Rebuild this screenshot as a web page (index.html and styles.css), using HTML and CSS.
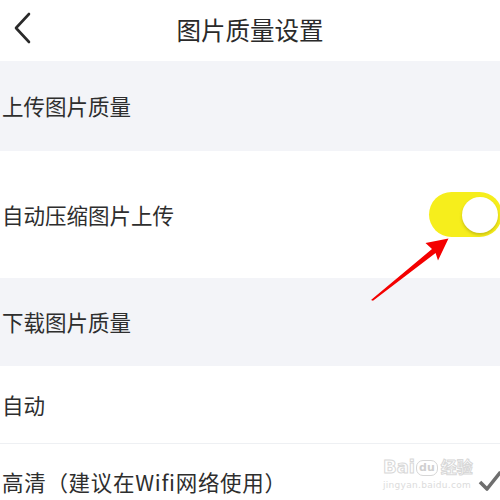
FILE: index.html
```html
<!DOCTYPE html>
<html lang="zh-CN">

<head>
	<meta charset="UTF-8">
	<meta name="viewport" content="width=device-width, initial-scale=1.0">
	<title>图片质量设置</title>
	<link rel="stylesheet" href="styles.css">
</head>

<body>
	<div class="page">
		<header class="top">
			<svg class="back" width="20" height="32" viewBox="0 0 20 32">
				<path d="M16 2 L3 16 L16 30" fill="none" stroke="#2a2a2a" stroke-width="2.6" stroke-linecap="round" stroke-linejoin="round" />
			</svg>
			<h1>图片质量设置</h1>
		</header>

		<div class="group group-upload">上传图片质量</div>

		<div class="row row-auto-zip">
			<span>自动压缩图片上传</span>
			<span class="switch"><i></i></span>
		</div>

		<div class="group group-download">下载图片质量</div>

		<div class="row row-auto">自动</div>

		<div class="row row-hd">
			<span class="hd-text">高清（建议在Wifi网络使用）</span>
			<svg class="check" width="24" height="22" viewBox="0 0 24 22">
				<path d="M2 12 L9 19 L22.5 2" fill="none" stroke="#6e6e6e" stroke-width="3.6" stroke-linejoin="round" />
			</svg>
		</div>

		<!-- watermark -->
		<div class="mark">
			<div class="mark-top">Bai<span class="paw">du</span><span class="cn">经验</span></div>
			<div class="mark-url">jingyan.baidu.com</div>
		</div>

		<!-- red pointer -->
		<svg class="arrow" width="500" height="500" viewBox="0 0 500 500">
			<polygon points="371,300 373,300.8 435.6,253 438,260.5 448.5,238.5 425.5,243 432,249" fill="#f40000" />
		</svg>
	</div>
</body>

</html>
```

FILE: styles.css
```css
* {
	margin: 0;
	padding: 0;
	box-sizing: border-box;
}

html,
body {
	width: 100%;
	height: 100%;
	overflow: hidden;
}

body {
	background: #fff;
	color: #2e2e2e;
	font-family: "Noto Sans CJK SC", "Noto Sans", sans-serif;
}

.page {
	position: relative;
	width: 500px;
	height: 500px;
	overflow: hidden;
}

.top {
	position: relative;
	display: flex;
	height: 61px;
	justify-content: center;
	align-items: center;
}

.top h1 {
	font-size: 24.5px;
	font-weight: normal;
	color: #2a2a2a;
	margin-top: -2px;
}

.back {
	position: absolute;
	left: 13px;
	top: 12px;
}

.group {
	display: flex;
	align-items: center;
	padding-left: 2px;
	background: #f3f4f8;
	font-size: 21.5px;
}

.group-upload {
	height: 90px;
	padding-bottom: 2px;
}

.group-download {
	height: 88px;
	padding-bottom: 2px;
}

.row {
	display: flex;
	align-items: center;
	justify-content: space-between;
	padding-left: 2px;
	background: #fff;
	font-size: 21.5px;
}

.row-auto-zip {
	height: 127px;
}

.row-auto {
	height: 78px;
	border-bottom: 1px solid #eef0f3;
}

.row-hd {
	height: 78px;
	padding-bottom: 4px;
}

.hd-text {
	letter-spacing: .7px;
}

.switch {
	position: relative;
	display: block;
	width: 73px;
	height: 45px;
	margin-right: -2px;
	border-radius: 23px;
	background: #f6ee1c;
}

.switch i {
	position: absolute;
	top: 5px;
	right: 4px;
	width: 36px;
	height: 36px;
	border-radius: 50%;
	background: #fff;
	box-shadow: 0 2px 3px rgba(120, 110, 0, .35);
}

.check {
	position: relative;
	z-index: 2;
	margin-right: -2px;
}

.mark {
	position: absolute;
	left: 383px;
	top: 454px;
	color: #fff;
	-webkit-text-stroke: 1px #d8d8d8;
	font-family: "DejaVu Sans", "Noto Sans CJK SC", sans-serif;
}

.mark-top {
	font-size: 18px;
	line-height: 24px;
	font-weight: bold;
	white-space: nowrap;
}

.paw {
	display: inline-block;
	margin: 0 3px 0 1px;
	padding: 0 2px;
	border: 1px solid #d6d6d6;
	border-radius: 7px;
	font-size: 11px;
	line-height: 14px;
	vertical-align: 2px;
	-webkit-text-stroke: 0;
	color: #d0d0d0;
}

.cn {
	font-size: 16px;
	font-family: "Noto Sans CJK SC", sans-serif;
}

.mark-url {
	font-size: 9px;
	line-height: 12px;
	-webkit-text-stroke: 0;
	color: #dcdcdc;
	letter-spacing: .3px;
}

.arrow {
	position: absolute;
	left: 0;
	top: 0;
	pointer-events: none;
}
```
